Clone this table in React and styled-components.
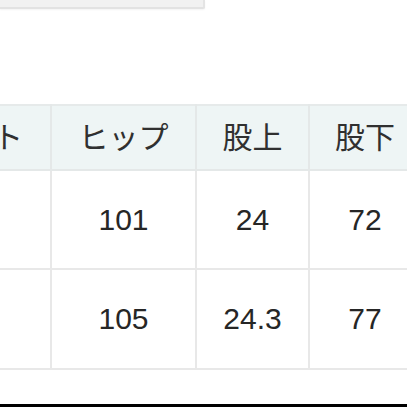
import React from "react";
import styled, { createGlobalStyle } from "styled-components";

const Global = createGlobalStyle`
  html, body { margin: 0; padding: 0; background: #fff; }
  body { width: 407px; height: 407px; overflow: hidden; }
  #root { height: 407px; }
`;

const Page = styled.div`
  position: relative;
  width: 407px;
  height: 407px;
  overflow: hidden;
  display: flex;
  flex-direction: column;
  font-family: "Liberation Sans", "Noto Sans CJK JP", sans-serif;
  color: #2a2a2a;
`;

const TopBox = styled.div`
  width: 203px;
  height: 7px;
  background: #f1f1f1;
  border-bottom: 2px solid #e2e2e2;
  border-right: 2px solid #e4e4e4;
  box-shadow: 0 1px 2px rgba(0, 0, 0, 0.05);
  border-bottom-right-radius: 2px;
`;

const Table = styled.table`
  margin-top: 95px;
  margin-left: -126px;
  width: 546px;
  table-layout: fixed;
  border-collapse: collapse;
  border-top: 2px solid #e6eaea;
`;

const HeadCell = styled.th`
  height: 58px;
  padding: 0 0 5px;
  background: #eef5f5;
  border: 2px solid #e4e8e8;
  border-top: none;
  font-family: "Noto Sans CJK JP", sans-serif;
  font-weight: 400;
  font-size: 30px;
  color: #303030;
  text-align: center;
  white-space: nowrap;
`;

const Cell = styled.td`
  height: ${(p) => p.$h}px;
  padding: 0;
  background: #fff;
  border: 2px solid #e8e8e8;
  font-family: "Liberation Sans", "Noto Sans CJK JP", sans-serif;
  font-size: 30px;
  color: #262626;
  text-align: center;
  white-space: nowrap;
`;

const Spacer = styled.div`
  flex: 1;
`;

const BottomBar = styled.div`
  height: 3px;
  background: #000;
`;

const cols = [176, 145, 113, 112];
const head = ["ウエスト", "ヒップ", "股上", "股下"];
const rows = [
  { h: 97, v: ["", "101", "24", "72"] },
  { h: 98, v: ["", "105", "24.3", "77"] },
];

export default function App() {
  return (
    <Page>
      <Global />
      <TopBox />
      <Table>
        <colgroup>
          {cols.map((w, i) => (
            <col key={i} style={{ width: w }} />
          ))}
        </colgroup>
        <thead>
          <tr>
            {head.map((h) => (
              <HeadCell key={h}>{h}</HeadCell>
            ))}
          </tr>
        </thead>
        <tbody>
          {rows.map((r, i) => (
            <tr key={i}>
              {r.v.map((v, j) => (
                <Cell key={j} $h={r.h}>
                  {v}
                </Cell>
              ))}
            </tr>
          ))}
        </tbody>
      </Table>
      <Spacer />
      <BottomBar />
    </Page>
  );
}
